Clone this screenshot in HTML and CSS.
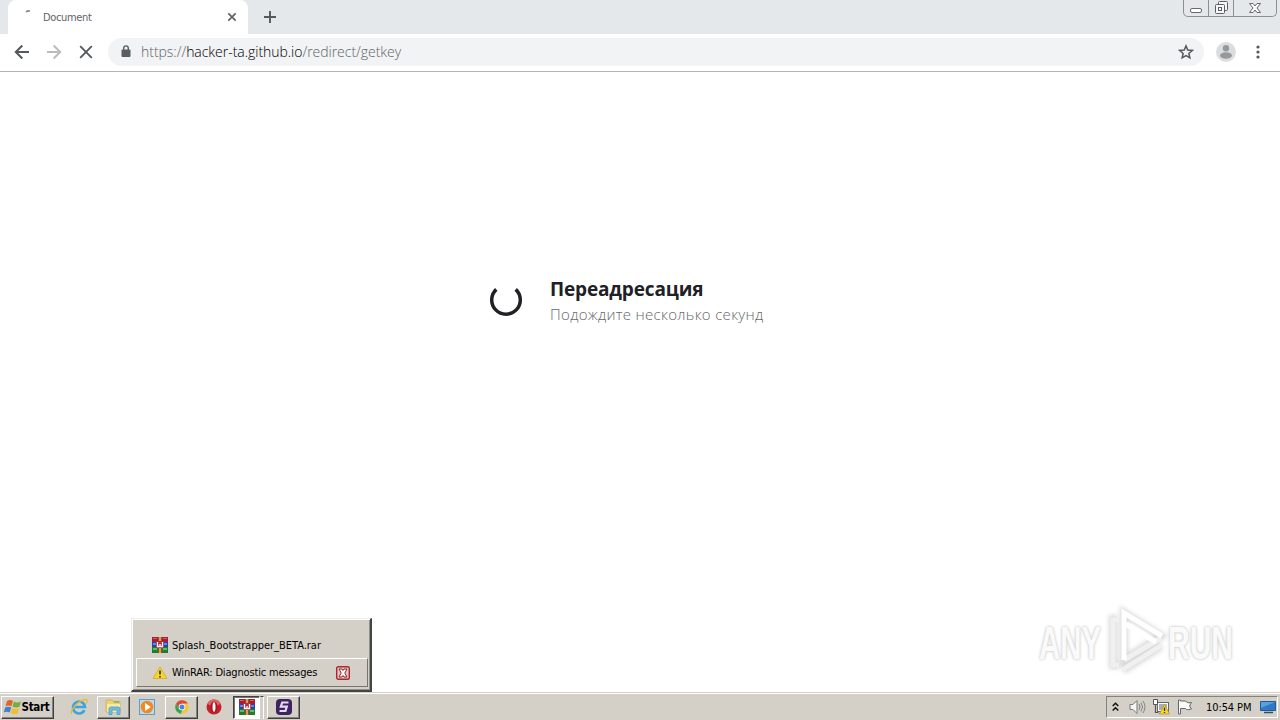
FILE: index.html
```html
<!DOCTYPE html>
<html lang="ru">
<head>
  <meta charset="UTF-8">
  <meta name="viewport" content="width=device-width, initial-scale=1">
  <title>Document</title>
  <link rel="stylesheet" href="styles.css">
</head>
<body>

  <!-- shared icons -->
  <svg class="defs" width="0" height="0">
    <symbol id="winrar" viewBox="0 0 16 16">
      <path fill="#a51c35" d="M0 0h16v5H0z"/>
      <path fill="#2446a8" d="M0 5h16v5H0z"/>
      <path fill="#237a35" d="M0 10h16v6H0z"/>
      <path fill="#e4566a" d="M1 1h4v1H1zM11 1h4v1h-4z"/>
      <path fill="#5b8be8" d="M1 6h3v2H1zM12 6h3v2h-3z"/>
      <path fill="#5cc062" d="M1 11h4v2H1zM11 11h4v2h-4z"/>
      <path fill="#8a5428" d="M6 0h4v16H6z"/>
      <path fill="#d9a04a" d="M7 0h2v16H7z"/>
      <path fill="#b82a3c" d="M4 4h8v7H4z"/>
      <path fill="none" stroke="#fff" stroke-width="1.3" d="M5.500 5v4.500h5V5M8 7v2"/>
    </symbol>
  </svg>

  <div class="tab-strip">
    <div class="tab">
      <svg class="tab-loader" width="16" height="16" viewBox="0 0 16 16"><path d="M4 3q1.500-1.500 4-1" fill="none" stroke="#85898d" stroke-width="1.500"/></svg>
      <span class="tab-title">Document</span>
      <svg class="tab-close" width="10" height="10" viewBox="0 0 10 10"><path d="M1.300 1.300l7.400 7.400M8.700 1.300L1.300 8.700" stroke="#5f6368" stroke-width="1.700"/></svg>
    </div>
    <svg class="new-tab" width="12" height="12" viewBox="0 0 12 12"><path d="M6 0v12M0 6h12" stroke="#55595d" stroke-width="1.900"/></svg>
    <div class="window-buttons">
      <span class="win-btn minimize"><svg width="14" height="14" viewBox="0 0 14 14"><rect x="1.500" y="7.500" width="11" height="4" rx="1.500" fill="#fff" stroke="#666a6f"/></svg></span>
      <span class="win-btn restore"><svg width="14" height="14" viewBox="0 0 14 14"><g fill="#f4f6f7" stroke="#5c6065"><rect x="4.500" y=".5" width="9" height="9" rx="1"/><rect x="1.500" y="3.500" width="9" height="9" rx="1"/><rect x="4.500" y="6.500" width="3" height="3"/></g></svg></span>
      <span class="win-btn close"><svg width="14" height="14" viewBox="0 0 14 14"><path d="M1.500 2.500h3.500L7 5l2-2.500h3.500L9 7l3.500 4.500H9L7 9l-2 2.500H1.500L5 7z" fill="#fff" stroke="#666a6f"/></svg></span>
    </div>
  </div>

  <div class="toolbar">
    <svg class="nav-icon" width="16" height="16" viewBox="0 0 16 16"><path d="M15 8H2M8.300 1.500L1.800 8l6.500 6.500" fill="none" stroke="#55585c" stroke-width="2"/></svg>
    <svg class="nav-icon" width="16" height="16" viewBox="0 0 16 16"><path d="M1 8h13M7.700 1.500L14.200 8l-6.500 6.500" fill="none" stroke="#b9bbbd" stroke-width="2"/></svg>
    <svg class="nav-icon" width="16" height="16" viewBox="0 0 16 16"><path d="M2.200 2.200l11.600 11.600M13.800 2.200L2.200 13.800" stroke="#55585c" stroke-width="1.900"/></svg>
    <div class="address-bar">
      <svg class="lock" width="10" height="13" viewBox="0 0 10 13"><rect x=".5" y="4.500" width="9" height="7.500" rx="1" fill="#5a5e63"/><path d="M2.700 5V3.200a2.300 2.300 0 0 1 4.600 0V5" fill="none" stroke="#5a5e63" stroke-width="1.400"/></svg>
      <span class="url"><span>https://</span><span class="host">hacker-ta.github.io</span><span class="path">/redirect/getkey</span></span>
      <svg class="star" width="16" height="16" viewBox="0 0 16 16"><path d="M8 1.900l1.750 4.150 4.500.4-3.400 2.950 1 4.400L8 11.500l-3.850 2.300 1-4.400-3.400-2.950 4.500-.4z" fill="none" stroke="#55595e" stroke-width="1.500"/></svg>
    </div>
    <svg class="avatar" width="20" height="20" viewBox="0 0 20 20"><circle cx="10" cy="10" r="10" fill="#dcdddf"/><circle cx="10" cy="6.200" r="3.200" fill="#96999c"/><ellipse cx="10" cy="13.500" rx="6" ry="3.200" fill="#96999c"/></svg>
    <svg class="menu" width="4" height="14" viewBox="0 0 4 14"><g fill="#55595e"><circle cx="2" cy="2" r="1.600"/><circle cx="2" cy="7" r="1.600"/><circle cx="2" cy="12" r="1.600"/></g></svg>
  </div>

  <main class="page">
    <div class="redirect">
      <svg class="spinner" width="34" height="34" viewBox="0 0 34 34"><path d="M7.300 6.400A14.300 14.300 0 1 0 26.700 6.400" fill="none" stroke="#202124" stroke-width="3.500"/></svg>
      <div class="message">
        <h1>Переадресация</h1>
        <p>Подождите несколько секунд</p>
      </div>
    </div>
  </main>

  <svg class="watermark" width="250" height="80" viewBox="0 0 250 80">
    <g class="mark-shadow">
      <path d="M94 11l37 23-37 24zM87 17h-4v46h6M93 68l38-24"/>
    </g>
    <g class="mark">
      <path class="edge" d="M94 58l37-22M89 18h-6v45h6M92 68l40-25"/>
      <path d="M94 58V11l38 23M96 22l30 18"/>
      <text x="9" y="57" textLength="62" lengthAdjust="spacingAndGlyphs">ANY</text>
      <text x="138" y="57" textLength="65" lengthAdjust="spacingAndGlyphs">RUN</text>
    </g>
  </svg>

  <div class="window-list">
    <div class="window-item">
      <svg width="16" height="16"><use href="#winrar" width="16" height="16"/></svg>
      <span>Splash_Bootstrapper_BETA.rar</span>
    </div>
    <div class="window-item active">
      <svg width="16" height="16" viewBox="0 0 16 16"><path d="M8 2l7 11.500H1z" fill="#f5d62c" stroke="#d8b42c" stroke-linejoin="round"/><path d="M8 5.500v4M8 11v1.600" stroke="#4a4012" stroke-width="1.800"/></svg>
      <span class="diagnostic">WinRAR: Diagnostic messages</span>
      <svg class="item-close" width="14" height="14" viewBox="0 0 14 14"><rect x=".7" y=".7" width="12.600" height="12.600" rx="1.500" fill="#e9c3c1" stroke="#a52832" stroke-width="1.400"/><path d="M3 3h3l1 1.500L8 3h3L8.800 7 11 11H8L7 9.500 6 11H3l2.200-4z" fill="#fff" stroke="#8d2430"/></svg>
    </div>
  </div>

  <div class="taskbar">
    <div class="task start">
      <svg width="18" height="16" viewBox="0 0 18 16"><path d="M3 2q3-2 6 0L7.500 7.300q-3-1.500-6 0z" fill="#e4632b"/><path d="M10 2.500q3 1.800 7 0l-1.500 5.300q-3.500 1.700-7-.2z" fill="#76ad3b"/><path d="M1.200 8.500q3-1.700 6 0L5.700 13.500q-3-1.500-6 0z" fill="#3c83ce"/><path d="M8.200 9q3.500 1.700 7 .2L13.700 14.500q-3.500 1.700-7-.5z" fill="#f4bd31"/></svg>
      <span>Start</span>
    </div>
    <div class="task flat ie">
      <svg width="18" height="18" viewBox="0 0 18 18"><path d="M14.400 12.200A6 6 0 1 1 15 9H4" fill="none" stroke="#38a5df" stroke-width="2.600"/><path d="M2 16C-1 13 9 2 15.500 1.500c2.500 0 1.500 2.500.6 4" fill="none" stroke="#e5b93c" stroke-width="1.400"/></svg>
    </div>
    <div class="task raised explorer">
      <svg width="17" height="16" viewBox="0 0 17 16"><path d="M1 1h6l1 1.500h7V13H1z" fill="#eed26f" stroke="#d0ad48" stroke-width=".8"/><path d="M2 5h13v8H2z" fill="#f8e9a5"/><path d="M4 15.500V10q0-2 2-2h7q2 0 2 2v5.500h-3V11H7v4.500z" fill="#74bde1" stroke="#3e97c4" stroke-width=".7"/><path d="M9 3h5" stroke="#6fb768" stroke-width="1.500"/></svg>
    </div>
    <div class="task flat player">
      <svg width="16" height="16" viewBox="0 0 16 16"><rect x=".5" y=".5" width="15" height="15" fill="#b8dbef" stroke="#5b9dcb"/><circle cx="8" cy="8" r="6.300" fill="#f08a20"/><path d="M6 4l5.800 4L6 12z" fill="#fff"/></svg>
    </div>
    <div class="task raised chrome">
      <svg width="14" height="14" viewBox="0 0 14 14"><circle cx="7" cy="7" r="6.800" fill="#f4c638"/><path d="M1.100 3.600A6.800 6.800 0 0 1 12.900 3.600H7L4 8.700z" fill="#dd4a3c"/><path d="M1.100 3.600L4.100 8.700 7 10.200l-1 3.500A6.800 6.800 0 0 1 1.100 3.600z" fill="#35a454"/><circle cx="7" cy="7" r="3.300" fill="#fff"/><circle cx="7" cy="7" r="2.500" fill="#4385e8"/></svg>
    </div>
    <div class="task flat opera">
      <svg width="16" height="16" viewBox="0 0 16 16"><circle cx="8" cy="8" r="7.500" fill="#c4212a"/><path d="M1.500 5a7 7 0 0 1 13 0q-6.500 4-13 0z" fill="#dc6465"/><ellipse cx="8" cy="8" rx="3.500" ry="5.500" fill="#a91520"/><ellipse cx="8" cy="8" rx="1.500" ry="4.700" fill="#fff"/></svg>
    </div>
    <div class="task pressed">
      <svg width="16" height="16"><use href="#winrar" width="16" height="16"/></svg>
    </div>
    <div class="stack-edge"></div>
    <div class="task raised splash">
      <svg width="16" height="16" viewBox="0 0 16 16"><rect width="16" height="16" rx="4" fill="#3d2460"/><path d="M12.500 3.500H6.200L4.800 7.600h6L9.500 12H3.500" fill="none" stroke="#e6d8f6" stroke-width="2.200"/></svg>
    </div>

    <div class="tray">
      <svg class="chevron" width="7" height="10" viewBox="0 0 7 10"><path d="M.7 4L3.500 1.300 6.300 4M.7 8.500l2.800-2.700 2.800 2.700" fill="none" stroke="#111" stroke-width="1.500"/></svg>
      <svg class="sound" width="17" height="16" viewBox="0 0 17 16"><path d="M1 5.500h3l4-4v13l-4-4H1z" fill="#f5f5f5" stroke="#797979"/><path d="M10 5q2 3 0 6M12 3.500q3 4.500 0 9M14 2q4 6 0 12" fill="none" stroke="#858585"/></svg>
      <svg class="network" width="17" height="16" viewBox="0 0 17 16"><rect x="4.500" y="3.500" width="11" height="9" fill="#fafafa" stroke="#666"/><path d="M6 5h8v6H6z" fill="#a9adb1"/><path d="M.5.500h4v5h-4z" fill="#fff" stroke="#555"/><path d="M2.500 6v7.500h3M6 14.500h5" fill="none" stroke="#555" stroke-width="1.200"/><path d="M11.500 5.500l5 9.500h-10z" fill="#f7da20" stroke="#bb9822" stroke-width=".8"/><path d="M11.500 8.500v3.500M11.500 13v1" stroke="#333" stroke-width="1.300"/></svg>
      <svg class="flag" width="16" height="16" viewBox="0 0 16 16"><path d="M1.500 1v14h2V9.500h5l1 1q1.500.5 5-.5l-2-3 2-3.500q-3 1-5-.5l-1-1h-5V1z" fill="#fafafa" stroke="#666"/></svg>
      <span class="clock">10:54 PM</span>
      <svg class="desktop" width="16" height="14" viewBox="0 0 16 14"><path d="M.5 1.500h15v9H.5z" fill="#2d79c7" stroke="#235b96"/><path d="M1 2h14L1 8z" fill="#5aa0df"/><path d="M4 12.500h9" stroke="#344c66" stroke-width="1.500"/></svg>
    </div>
  </div>

</body>
</html>
```
FILE: styles.css
```css
* {
  box-sizing: border-box;
}

body {
  margin: 0;
  width: 1280px;
  height: 720px;
  display: flex;
  flex-direction: column;
  position: relative;
  overflow: hidden;
  background-color: #fff;
  font-family: "DejaVu Sans Condensed", "DejaVu Sans", sans-serif;
  font-size: 11px;
  color: #000;
}

svg {
  display: block;
  flex: none;
}

.defs {
  position: absolute;
}

/* Browser */
.tab-strip {
  height: 34px;
  flex: none;
  display: flex;
  padding-left: 8px;
  background-color: #e4e8eb;
}

.tab {
  width: 240px;
  height: 34px;
  display: flex;
  align-items: center;
  padding: 0 11px 0 13px;
  background-color: #fff;
  border-radius: 8px 8px 0 0;
}

.tab-loader {
  align-self: flex-start;
  margin-top: 9px;
  margin-left: 1px;
}

.tab-title {
  flex: 1;
  margin-left: 5px;
  font-size: 11px;
  letter-spacing: -0.35px;
  color: #5f6368;
}

.new-tab {
  margin: 11px 0 0 16px;
}

.window-buttons {
  display: flex;
  height: 17px;
  width: 94px;
  margin-left: auto;
  margin-right: 3px;
  border: 1px solid #8c9094;
  border-top: none;
  border-radius: 0 0 5px 5px;
}

.win-btn {
  display: flex;
  justify-content: center;
  align-items: center;
  width: 25px;
  border-right: 1px solid #8c9094;
}

.win-btn.close {
  width: 42px;
  border-right: none;
}

.toolbar {
  height: 38px;
  flex: none;
  display: flex;
  align-items: center;
  padding: 0 20px 2px 14px;
  border-bottom: 1px solid #b3b4b5;
  background-color: #fff;
}

.nav-icon {
  margin-right: 16px;
}

.nav-icon:nth-child(3) {
  margin-right: 14px;
}

.address-bar {
  width: 1096px;
  height: 28px;
  display: flex;
  align-items: center;
  padding: 0 10px 0 13px;
  border-radius: 14px;
  background-color: #f1f3f4;
}

.url {
  flex: 1;
  margin-left: 10px;
  font-family: "Open Sans", "Noto Sans", sans-serif;
  font-size: 14px;
  font-weight: 300;
  letter-spacing: -0.03px;
  color: #5f6368;
}

.host {
  color: #000;
}

.avatar {
  margin-left: 12px;
}

.menu {
  margin-left: auto;
}

/* Page */
.page {
  flex: 1;
  background-color: #fff;
}

.redirect {
  display: flex;
  margin: 202px 0 0 489px;
}

.spinner {
  margin-top: 9px;
}

.message {
  margin-left: 27px;
  font-family: "Open Sans", "Noto Sans", sans-serif;
  white-space: nowrap;
}

.message h1 {
  margin: 0;
  font-size: 19px;
  line-height: 30px;
  font-weight: 700;
  letter-spacing: -0.15px;
  color: #202124;
}

.message p {
  margin: 0;
  font-size: 15px;
  line-height: 21px;
  font-weight: 300;
  letter-spacing: 0.31px;
  color: #66686a;
}

.watermark {
  position: absolute;
  left: 1030px;
  top: 602px;
  font-family: "Liberation Sans", sans-serif;
  font-size: 47px;
  font-weight: 700;
}

.mark-shadow {
  filter: blur(2px);
}

.mark-shadow path {
  fill: none;
  stroke: #dadada;
  stroke-width: 8;
}

.mark {
  fill: #fafafa;
}

.mark text {
  text-shadow: 0 0 4px #ccc, 0 0 3px #d6d6d6;
}

.mark path {
  fill: none;
  stroke: #fff;
  stroke-width: 5;
}

.mark .edge {
  stroke: #f0f0f0;
}

/* Taskbar window list */
.window-list {
  position: absolute;
  left: 131px;
  top: 618px;
  width: 241px;
  height: 74px;
  padding: 13px 2px 0 4px;
  background-color: #d4d0c8;
  border: 1px solid #eeece7;
  border-right: 2px solid #444;
  border-bottom: 2px solid #444;
  box-shadow: inset 1px 1px #fff, inset -1px -1px #94918b;
}

.window-item {
  height: 26px;
  display: flex;
  align-items: center;
  padding-left: 16px;
  letter-spacing: -0.02px;
  white-space: nowrap;
}

.window-item span {
  margin-left: 4px;
}

.window-item .diagnostic {
  letter-spacing: -0.17px;
}

.window-item.active {
  height: 29px;
  padding-left: 15px;
  border: 1px solid #fff;
  border-right-color: #77746e;
  border-bottom-color: #77746e;
}

.item-close {
  margin-left: auto;
  margin-right: 17px;
}

/* Taskbar */
.taskbar {
  height: 28px;
  flex: none;
  display: flex;
  align-items: center;
  padding: 1px 2px 0 1px;
  border-top: 1px solid #d4d0c8;
  background-color: #d4d0c8;
  box-shadow: inset 0 1px #fff;
}

.task {
  height: 23px;
  display: flex;
  align-items: center;
  justify-content: center;
}

.start,
.raised {
  border: 1px solid #fff;
  border-right: 1px solid #404040;
  border-bottom: 1px solid #404040;
  box-shadow: inset -1px -1px #85827c;
}

.start {
  width: 53px;
  padding-right: 2px;
  font-size: 11.5px;
  font-weight: 700;
  letter-spacing: -0.3px;
}

.raised {
  width: 33px;
}

.ie {
  width: 36px;
  margin-left: 7px;
}

.player,
.opera {
  width: 35px;
}

.player {
  padding-right: 2px;
}

.opera {
  padding-right: 3px;
}

.pressed {
  width: 27px;
  background-color: #fff;
  border: 1px solid #404040;
  border-right-color: #fff;
  border-bottom-color: #fff;
  box-shadow: inset 1px 1px #77746e;
}

.stack-edge {
  width: 4px;
  height: 23px;
  margin-right: 3px;
  border-top: 1px solid #404040;
  border-left: 1px solid #d4d0c8;
  border-right: 1px solid #fff;
}

.tray {
  width: 172px;
  height: 22px;
  display: flex;
  align-items: center;
  margin-left: auto;
  padding-left: 5px;
  border: 1px solid #85827c;
  border-right-color: #fff;
  border-bottom-color: #fff;
}

.sound {
  margin-left: 10px;
}

.network {
  margin-left: 7px;
}

.flag {
  margin-left: 7px;
}

.clock {
  flex: 1;
  margin-left: 13px;
  letter-spacing: -0.1px;
  white-space: nowrap;
}

.desktop {
  margin-right: 1px;
}
```
